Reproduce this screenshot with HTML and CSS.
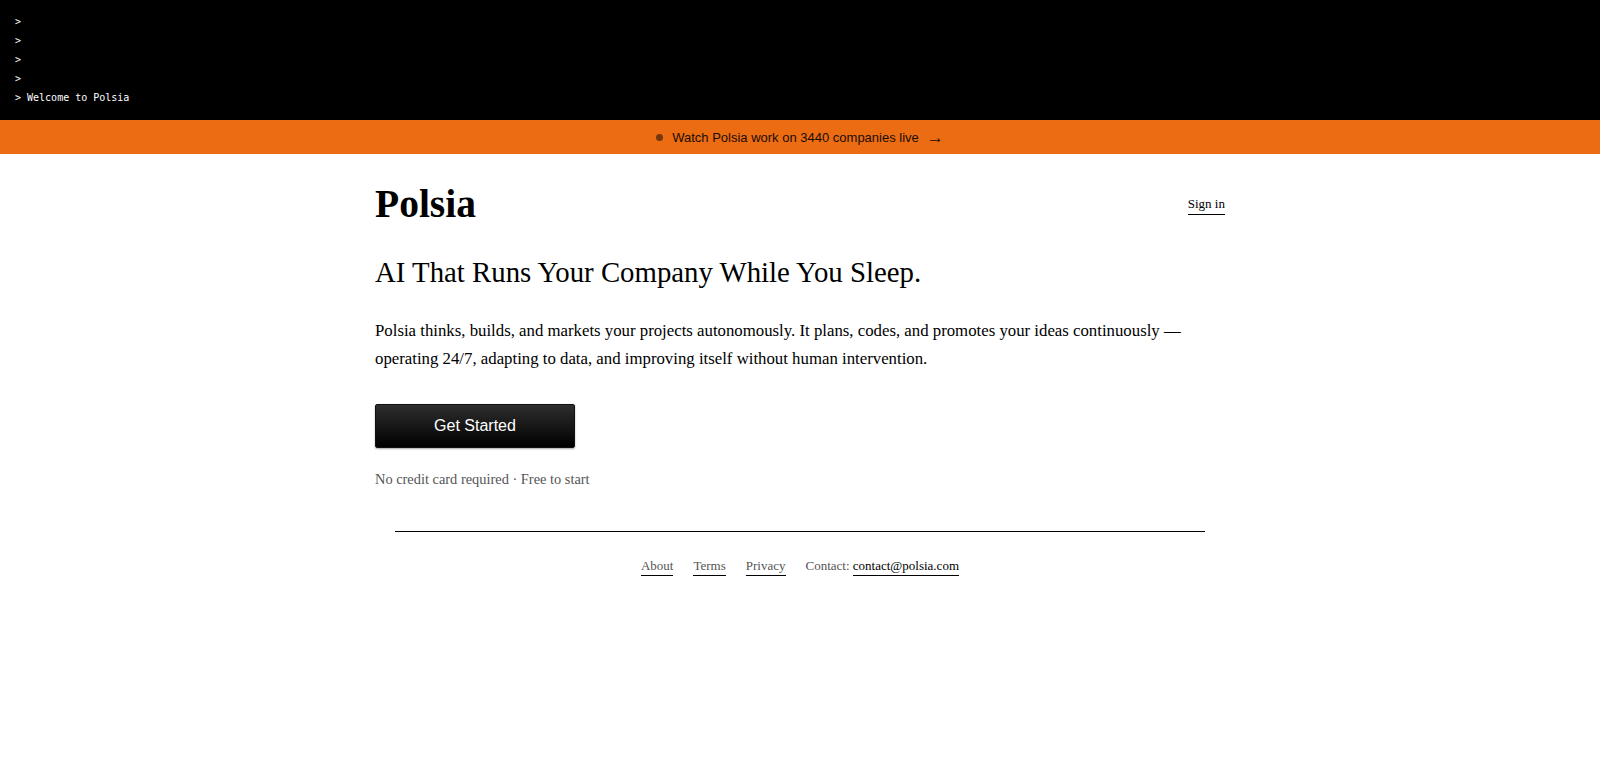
FILE: index.html
```html
<!DOCTYPE html>
<html lang="en">
<head>
    <meta charset="UTF-8">
    <title>Polsia</title>
    <link rel="stylesheet" href="styles.css">
</head>
<body>
<div class="terminal">
    <div class="line">&gt;</div>
    <div class="line">&gt;</div>
    <div class="line">&gt;</div>
    <div class="line">&gt;</div>
    <div class="line">&gt; Welcome to Polsia</div>
</div>
<a class="live-bar" href="#">
    <span class="dot"></span>
    <span>Watch Polsia work on 3440 companies live</span>
    <span class="arrow">&rarr;</span>
</a>
<div class="page">
    <div class="header">
        <h1 class="logo">Polsia</h1>
        <a class="sign-in" href="#">Sign in</a>
    </div>
    <h2 class="tagline">AI That Runs Your Company While You Sleep.</h2>
    <p class="intro">Polsia thinks, builds, and markets your projects autonomously. It plans, codes, and promotes your ideas continuously — operating 24/7, adapting to data, and improving itself without human intervention.</p>
    <button class="start-btn">Get Started</button>
    <div class="note">No credit card required · Free to start</div>
    <div class="footer">
        <a href="#">About</a>
        <a href="#">Terms</a>
        <a href="#">Privacy</a>
        <span class="contact">Contact: <a class="mail" href="#">contact@polsia.com</a></span>
    </div>
</div>
</body>
</html>
```

FILE: styles.css
```css
body,div,h1,h2,p{margin:0;padding:0;}
body{background:#fff;color:#000;font-family:"Liberation Serif","Times New Roman",serif;}
a{color:inherit;text-decoration:none;}

.terminal{background:#000;color:#fff;padding:12px 15px 13px;font:10px/19px "DejaVu Sans Mono",monospace;}
.terminal .line{white-space:pre;}

.live-bar{display:flex;align-items:center;justify-content:center;height:34px;background:#eb6c12;color:#1a0d05;font:13px "Liberation Sans",Arial,sans-serif;}
.live-bar .dot{width:7px;height:7px;border-radius:50%;background:#75360b;margin-right:9px;}
.live-bar .arrow{margin-left:8px;font-size:17px;line-height:1;}

.page{width:850px;margin:0 auto;}
.header{display:flex;align-items:center;justify-content:space-between;padding-top:28px;}
.logo{font-size:39.5px;line-height:45px;font-weight:700;}
.sign-in{font-size:13px;line-height:15px;padding-bottom:3px;border-bottom:1px solid #000;margin-top:2px;}

.tagline{margin-top:28px;font-size:28.8px;line-height:1.2;font-weight:400;}
.intro{margin-top:27px;font-size:16.8px;line-height:28px;}

.start-btn{display:block;margin-top:31px;width:200px;height:44px;border:1px solid #111;border-radius:2px;background:linear-gradient(#2e2e2e,#000);box-shadow:0 1px 2px rgba(0,0,0,.35);color:#fff;font:16px "Liberation Sans",Arial,sans-serif;cursor:pointer;}
.note{margin-top:21px;font-size:14.4px;line-height:20px;color:#555;}

.footer{display:flex;justify-content:center;gap:20px;margin:42px 20px 0;padding-top:26px;border-top:1px solid #000;font-size:13px;line-height:15px;color:#555;}
.footer a{padding-bottom:2px;border-bottom:1px solid #000;}
.footer .mail{color:#000;}
```
